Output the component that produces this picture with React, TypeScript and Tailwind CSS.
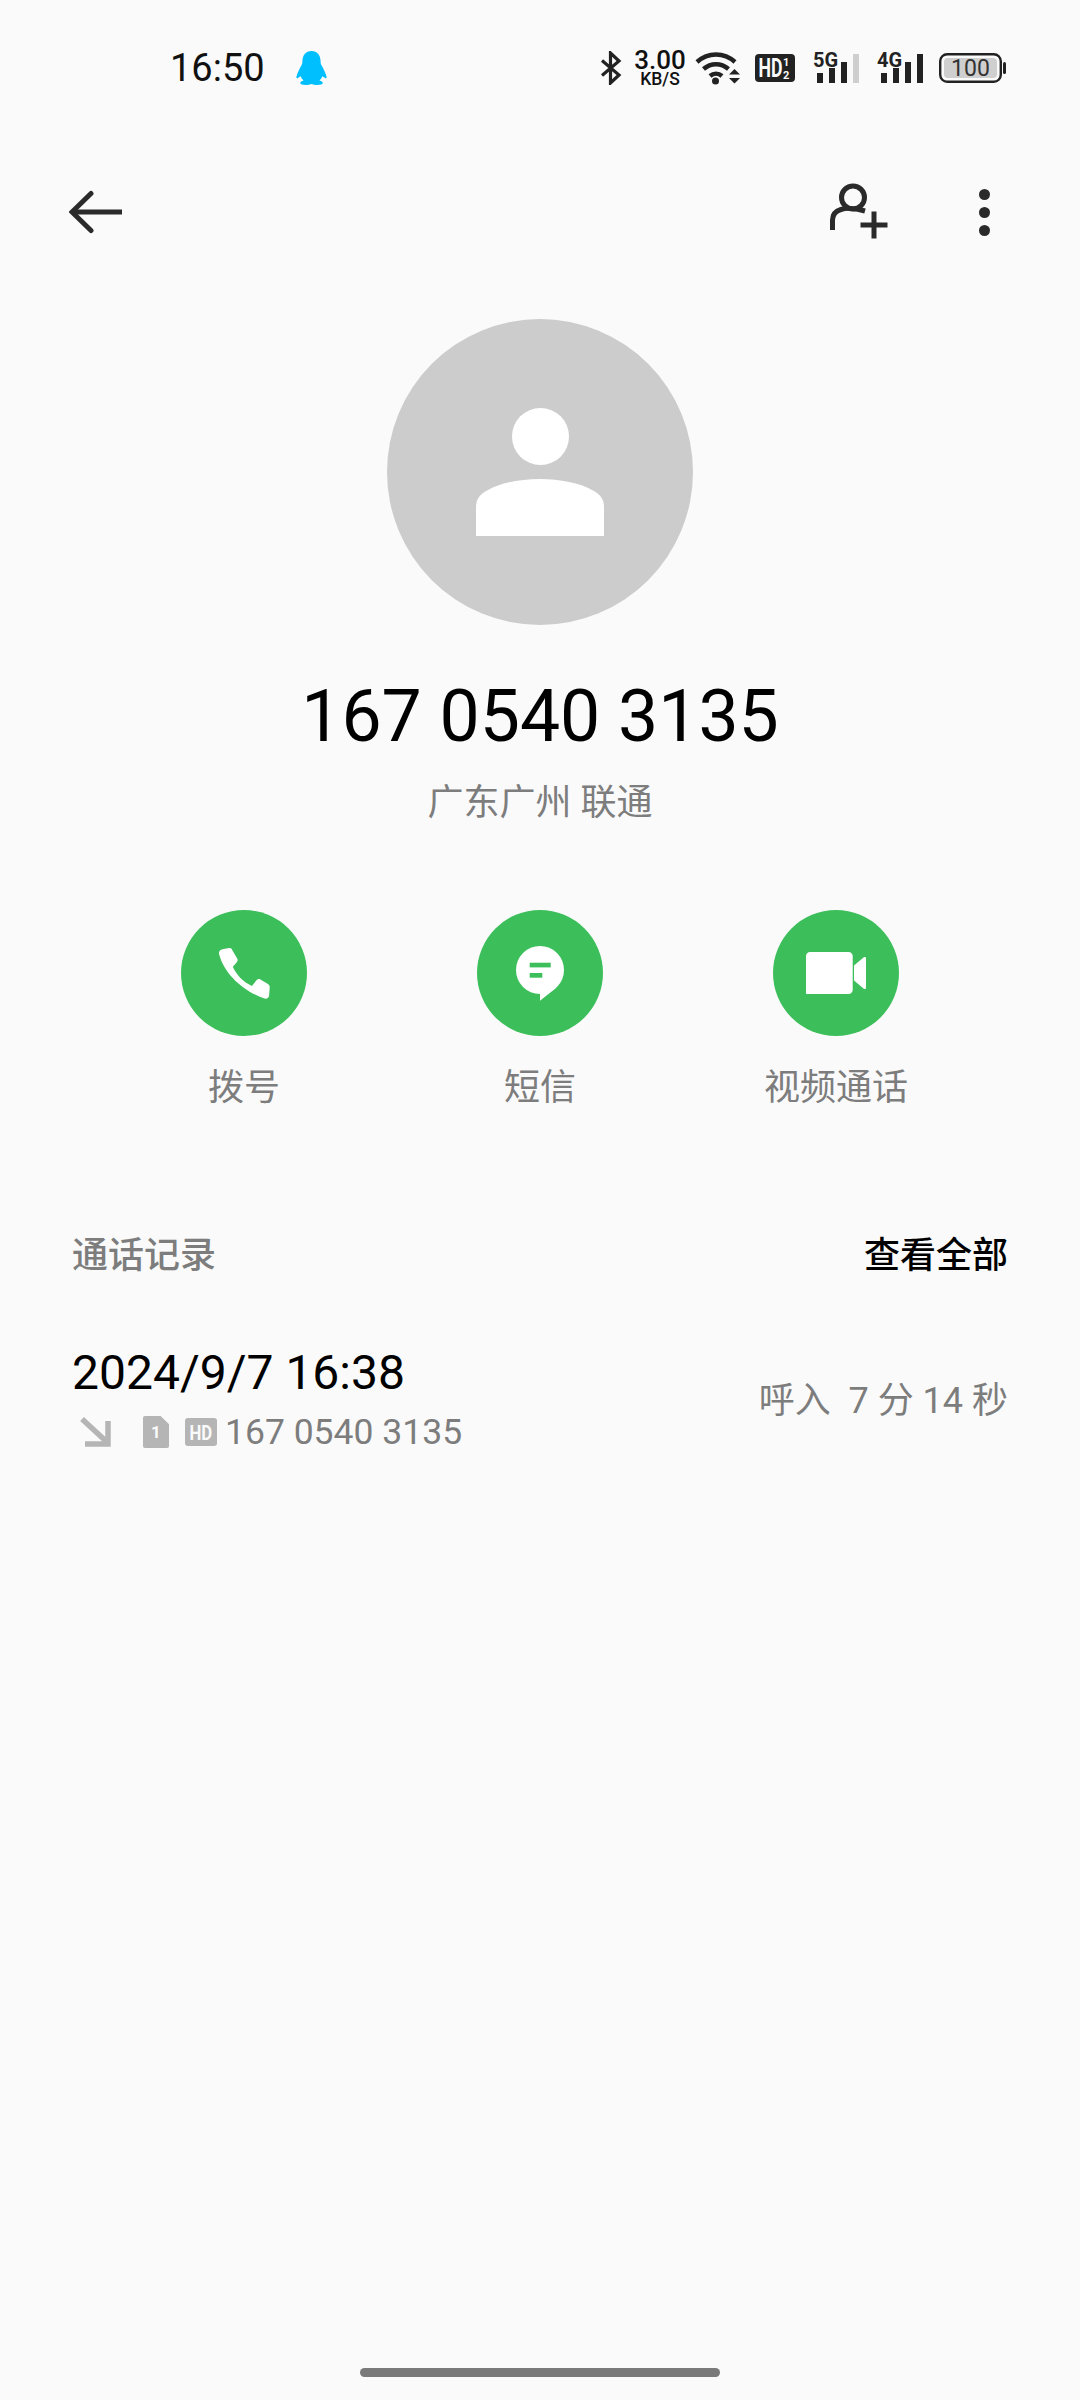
import React from 'react';

const font = 'font-["Roboto","Noto_Sans_CJK_SC",sans-serif]';

function Penguin() {
  return (
    <svg width="31" height="34" viewBox="0 0 31 34" className="ml-[31px]">
      <path
        fill="#00BFFF"
        d="M15.5 0C9.6 0 6.4 4.6 6.4 10.4c0 1.4-.2 2.6-.9 3.8C3.4 18 1.4 21.6.4 25.8c-.3 1.400.5 1.800 1.500 1.100l2.600-1.700c.7 1.700 1.700 3.100 3 4.300-1.900.6-3.300 1.500-3.300 2.600 0 1.200 2.200 1.900 6 1.900 2 0 3.600-.3 5.300-.9 1.700.6 3.300.9 5.300.9 3.800 0 6-.7 6-1.900 0-1.100-1.400-2-3.300-2.600 1.300-1.200 2.300-2.600 3-4.300l2.600 1.700c1 .7 1.800.3 1.500-1.100-1-4.200-3-7.800-5.100-11.600-.7-1.200-.9-2.400-.9-3.800C24.600 4.600 21.400 0 15.500 0z"
      />
    </svg>
  );
}

function Signal({ label, lastColor }: { label: string; lastColor: string }) {
  return (
    <div className="relative w-[46px] h-[32px]">
      <span className="absolute left-0 top-0 text-[20px] leading-[16px] font-bold text-[#222]">{label}</span>
      <svg width="46" height="32" viewBox="0 0 46 32">
        <rect x="4" y="21" width="6" height="10" fill="#222" />
        <rect x="16" y="16" width="6" height="15" fill="#222" />
        <rect x="28" y="10" width="6" height="21" fill="#222" />
        <rect x="40" y="2" width="6" height="29" fill={lastColor} />
      </svg>
    </div>
  );
}

function StatusBar() {
  return (
    <div className="h-[136px] flex items-center pl-[170px] pr-[74px] justify-between">
      <div className="flex items-center">
        <span className="text-[38px] leading-[44px] text-[#111]">16:50</span>
        <Penguin />
      </div>
      <div className="flex items-center">
        <svg width="22" height="34" viewBox="0 0 22 34" fill="none" stroke="#222" strokeWidth="3.200" className="ml-[1px]">
          <path d="M2 9.500 19 24 10.500 32V2L19 10 2 24.500" />
        </svg>
        <div className="ml-[12px] w-[52px] flex flex-col items-center text-[#111] font-medium">
          <span className="text-[26px] leading-[22px]">3.00</span>
          <span className="text-[17.500px] leading-[16px]">KB/S</span>
        </div>
        <svg width="46" height="34" viewBox="0 0 46 34" className="ml-[9px]">
          <g fill="none" stroke="#222" strokeWidth="4.500">
            <path d="M2 11C13 1 29 1 40 11" />
            <path d="M8.500 18C16 11.500 26 11.500 33.500 18" />
            <path d="M15 25C18.500 22 23.500 22 27 25" />
          </g>
          <circle cx="20.500" cy="30" r="3.500" fill="#222" />
          <path d="M34 23.500 39.500 18 45 23.500zM34 27H45L39.500 32.500z" fill="#222" />
        </svg>
        <svg width="40" height="28" viewBox="0 0 40 28" className="ml-[14px]">
          <rect width="40" height="28" rx="4" fill="#222" />
          <text transform="translate(3.500 22.500) scale(.68 1)" fontFamily="Roboto" fontWeight="700" fontSize="26" fill="#fafafa">HD</text>
          <text x="28" y="12" fontFamily="Roboto" fontWeight="700" fontSize="11" fill="#fafafa">1</text>
          <text x="28" y="24.500" fontFamily="Roboto" fontWeight="700" fontSize="11" fill="#fafafa">2</text>
        </svg>
        <div className="ml-[18px]">
          <Signal label="5G" lastColor="#cfcfcf" />
        </div>
        <div className="ml-[18px]">
          <Signal label="4G" lastColor="#222" />
        </div>
        <svg width="67" height="30" viewBox="0 0 67 30" className="ml-[16px]">
          <rect x="1.200" y="1.200" width="60.600" height="27.600" rx="7" fill="none" stroke="#222" strokeWidth="2.400" />
          <rect x="5" y="5" width="53" height="20" rx="4" fill="#cfcfcf" />
          <rect x="64" y="9" width="3" height="12" rx="1.500" fill="#222" />
          <text x="31.500" y="23" textAnchor="middle" fontFamily="Roboto" fontSize="23" fill="#333">100</text>
        </svg>
      </div>
    </div>
  );
}

function Toolbar() {
  return (
    <div className="h-[152px] flex items-center justify-between pl-[69px] pr-[90px]">
      <svg width="56" height="44" viewBox="0 0 56 44" fill="none" stroke="#2a2a2a" strokeWidth="5" strokeLinecap="round">
        <path d="M22 3.500 3 22 22 40.500" />
        <path d="M3 22H53" strokeLinecap="butt" />
      </svg>
      <div className="flex items-center">
        <svg width="60" height="60" viewBox="0 0 60 60" fill="none" stroke="#2a2a2a" strokeWidth="5">
          <circle cx="24" cy="15.500" r="11.500" />
          <path d="M3.500 48V38C3.500 28 15 23 36 29" />
          <path d="M31.500 43H58.500M45 29.500V56.500" />
        </svg>
        <div className="ml-[90px] flex flex-col gap-[7px]">
          <div className="w-[11px] h-[11px] rounded-full bg-[#2a2a2a]" />
          <div className="w-[11px] h-[11px] rounded-full bg-[#2a2a2a]" />
          <div className="w-[11px] h-[11px] rounded-full bg-[#2a2a2a]" />
        </div>
      </div>
    </div>
  );
}

function Avatar() {
  return (
    <div className="mt-[31px] mx-auto w-[306px] h-[306px] rounded-full bg-[#cccccc] flex flex-col items-center">
      <div className="mt-[89px] w-[57px] h-[57px] rounded-full bg-white" />
      <svg width="128" height="57" viewBox="0 0 128 57" className="mt-[14px]">
        <path d="M0 57V28C0 20 4 15 12 11 24 4 44 0 64 0s40 4 52 11c8 4 12 9 12 17v29z" fill="#fff" />
      </svg>
    </div>
  );
}

const actions = [
  {
    label: '拨号',
    icon: (
      <path
        transform="translate(38 38)"
        fill="#fff"
        d="M.2 6.500C-.8 3.600 1 1.800 3.400 1.200L10 .1c1.400-.2 2.600.5 3.200 1.800l5 8.500c.7 1.200.6 2.500-.2 3.500l-4.200 4.900c3.500 8 10.500 15.400 19.100 19.100l4.800-5.800c1-1.200 2.400-1.400 3.700-.7l7.200 4.300c1.500.9 2.200 2.100 2.100 3.700l-.6 8.200c-.2 2.400-2.200 3.600-4.600 3C26 44 5.500 27 .2 6.500z"
      />
    ),
  },
  {
    label: '短信',
    icon: (
      <g>
        <circle cx="63" cy="60" r="24" fill="#fff" />
        <path fill="#fff" d="M63 80V90.700L79 78z" />
        <rect x="52.700" y="52.700" width="21" height="4.700" fill="#3cbf5a" />
        <rect x="52.700" y="63" width="12.600" height="4.700" fill="#3cbf5a" />
      </g>
    ),
  },
  {
    label: '视频通话',
    icon: (
      <path
        fill="#fff"
        d="M33 46c0-2.200 1.800-4 4-4h38.700c2.200 0 4 1.800 4 4v34c0 2.200-1.800 4-4 4H33zM81 55.500l9.800-8.200c1-.8 2.200-.2 2.200 1v29.400c0 1.200-1.200 1.800-2.200 1L81 70.500z"
      />
    ),
  },
];

function Actions() {
  return (
    <div className="mt-[82px] px-[96px] grid grid-cols-3">
      {actions.map((a) => (
        <div key={a.label} className="flex flex-col items-center">
          <div className="w-[126px] h-[126px] rounded-full bg-[#3cbf5a]">
            <svg width="126" height="126" viewBox="0 0 126 126">
              {a.icon}
            </svg>
          </div>
          <span className="mt-[27px] text-[36px] leading-[50px] text-[#7d7d7d]">{a.label}</span>
        </div>
      ))}
    </div>
  );
}

function CallRecord() {
  return (
    <div className="px-[72px]">
      <div className="mt-[118px] flex justify-between text-[36px] leading-[50px] font-medium">
        <span className="text-[#7d7d7d]">通话记录</span>
        <span className="text-black">查看全部</span>
      </div>
      <div className="mt-[62px] flex items-center justify-between">
        <div className="flex flex-col">
          <span className="text-[48px] leading-[60px] text-black">2024/9/7 16:38</span>
          <div className="mt-[7px] flex items-center h-[44px]">
            <svg width="31" height="30" viewBox="0 0 31 30" className="ml-[8px]" fill="none" stroke="#b5b5b5" strokeWidth="5.500">
              <path d="M2 2 28 26" />
              <path d="M28 4V27H5" />
            </svg>
            <div className="ml-[32px] w-[26px] h-[32px] bg-[#b5b5b5] rounded-[2px] [clip-path:polygon(0_0,68%_0,100%_26%,100%_100%,0_100%)] flex items-center justify-center">
              <span className="text-[17px] leading-[20px] font-bold text-[#fafafa]">1</span>
            </div>
            <svg width="32" height="28" viewBox="0 0 32 28" className="ml-[16px]">
              <rect width="32" height="28" rx="3" fill="#b5b5b5" />
              <text transform="translate(4.500 21.500) scale(.8 1)" fontFamily="Roboto" fontWeight="700" fontSize="21" fill="#fafafa">HD</text>
            </svg>
            <span className="ml-[8px] text-[35.500px] leading-[44px] text-[#7d7d7d]">167 0540 3135</span>
          </div>
        </div>
        <span className="mt-[4px] text-[36px] leading-[50px] text-[#7d7d7d] whitespace-pre">呼入  7 分 14 秒</span>
      </div>
    </div>
  );
}

export default function App() {
  return (
    <div className={`w-[1080px] h-[2400px] bg-[#fafafa] flex flex-col ${font}`}>
      <StatusBar />
      <Toolbar />
      <Avatar />
      <div className="mt-[50px] text-center text-[71.500px] leading-[84px] text-black">167 0540 3135</div>
      <div className="mt-[19px] text-center text-[36px] leading-[50px] text-[#7d7d7d]">广东广州 联通</div>
      <Actions />
      <CallRecord />
      <div className="mt-auto mb-[23px] mx-auto w-[360px] h-[9px] rounded-full bg-[#7a7a7a]" />
    </div>
  );
}
